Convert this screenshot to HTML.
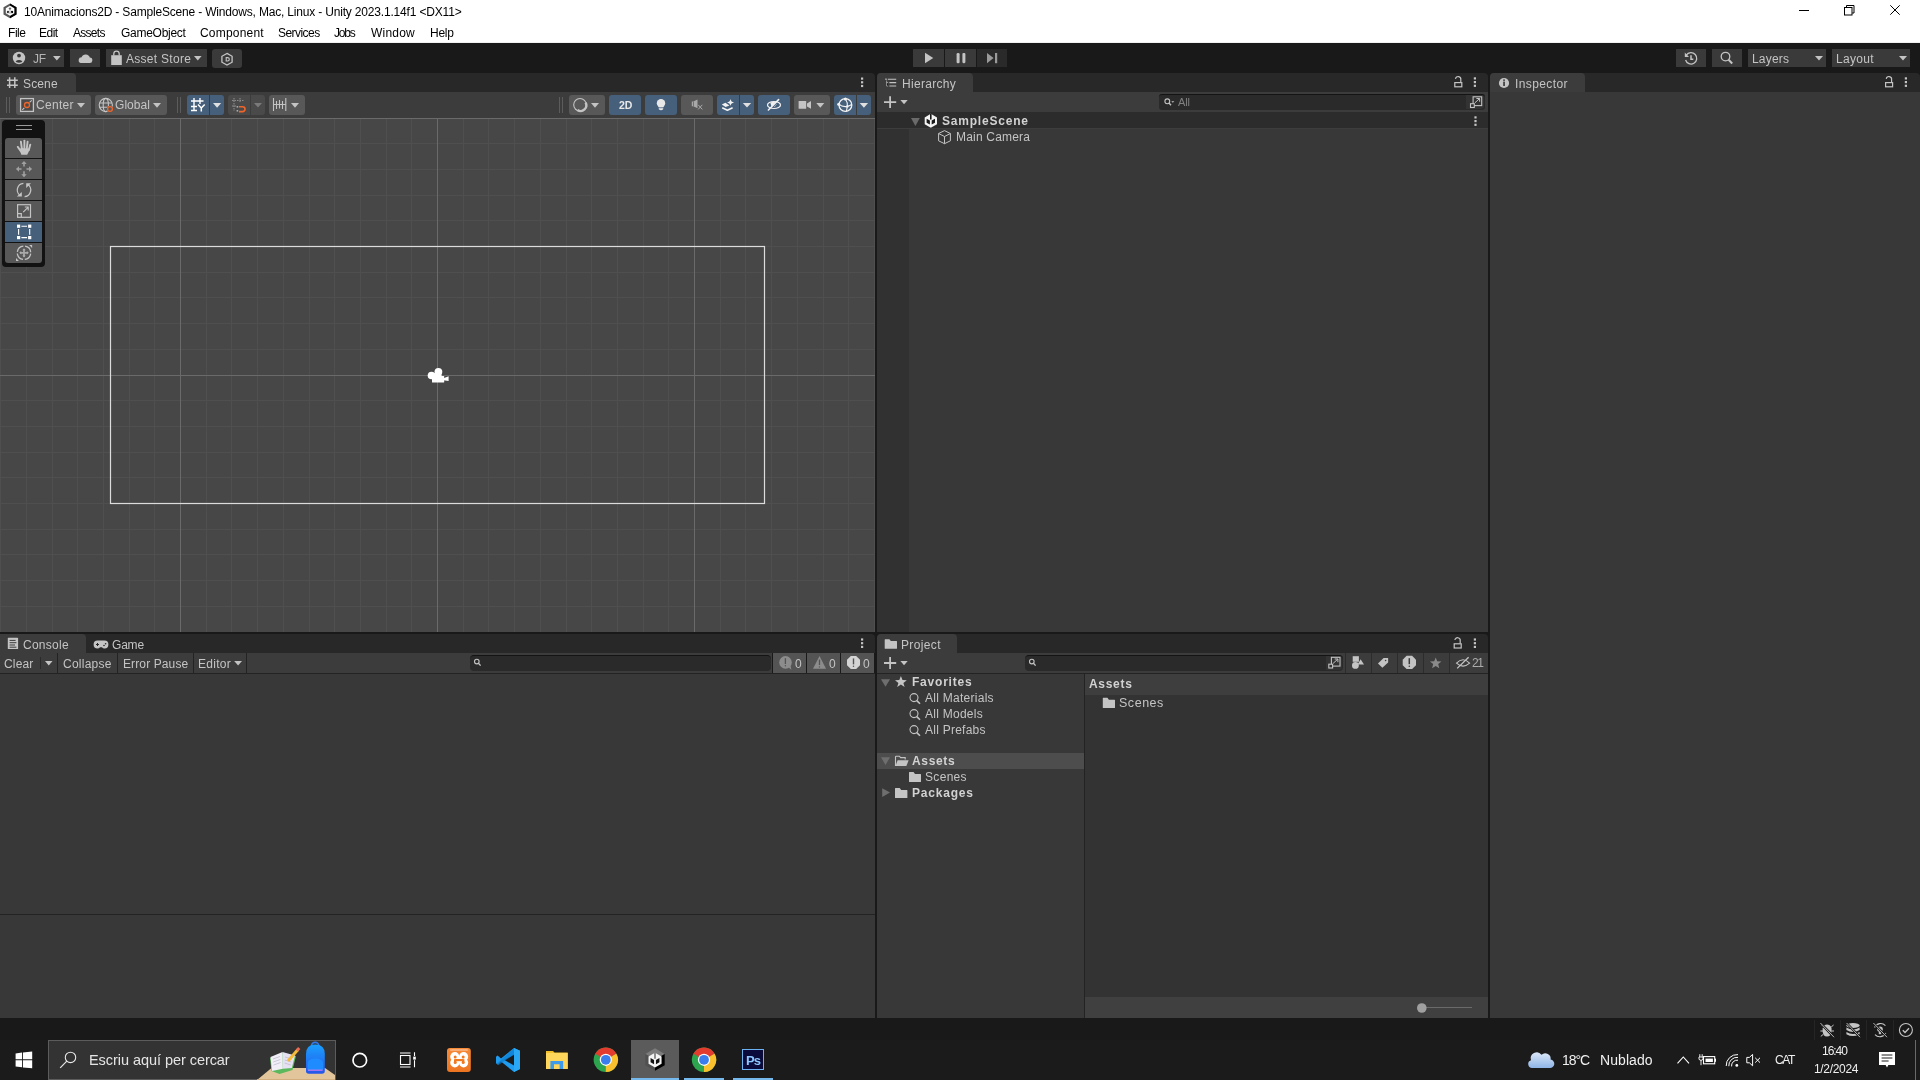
<!DOCTYPE html>
<html><head><meta charset="utf-8">
<style>
*{margin:0;padding:0;box-sizing:border-box}
html,body{width:1920px;height:1080px;overflow:hidden;background:#191919;font-family:"Liberation Sans",sans-serif;font-size:12px;color:#c4c4c4}
.a{position:absolute}
.t{position:absolute;white-space:nowrap;line-height:1;will-change:transform}
svg{position:absolute;overflow:visible}
</style></head><body>
<div class="a" style="left:0px;top:0px;width:1920px;height:42px;background:#ffffff"></div>
<div class="a" style="left:0px;top:42px;width:1920px;height:1px;background:#f0f0f0"></div>
<svg style="left:0px;top:0px;" width="24" height="24" viewBox="0 0 24 24"><polygon points="10,3.5 16.5,7.2 16.5,14.6 10,18.3 3.5,14.6 3.5,7.2" fill="#5a5a5a"/><polygon points="10,3.5 16.5,7.2 16.5,14.6 10,18.3 10,16 14.5,13.4 14.5,8.2 10,5.5" fill="#000"/><polygon points="10,5.8 14.2,8.2 14.2,13.3 10,15.8 5.8,13.3 5.8,8.2" fill="#fff"/><circle cx="10" cy="8.6" r="1.2" fill="#666"/><circle cx="8" cy="12" r="1.2" fill="#333"/><circle cx="12" cy="12" r="1.2" fill="#000"/><path d="M10 9.5V13.5M8.5 12.3L10 13.3L11.5 12.3" stroke="#aaa" stroke-width="0.8" fill="none"/></svg>
<svg style="left:0px;top:0px;" width="1" height="1" viewBox="0 0 1 1"><path d="M1799 10.5H1809" stroke="#000" stroke-width="1"/><rect x="1844.5" y="7.5" width="7.5" height="7.5" fill="none" stroke="#000" stroke-width="1"/><path d="M1846.5 7.3 V5.5 H1854 V13 H1852.2" stroke="#000" fill="none" stroke-width="1"/><path d="M1890.3 5.3L1899.7 14.7M1899.7 5.3L1890.3 14.7" stroke="#000" stroke-width="1"/></svg>
<div class="a" style="left:0px;top:43px;width:1920px;height:30px;background:#191919"></div>
<div class="a" style="left:8px;top:49px;width:56px;height:18px;background:#3a3a3a"></div>
<div class="a" style="left:70px;top:49px;width:30px;height:18px;background:#3a3a3a"></div>
<div class="a" style="left:106px;top:49px;width:101px;height:18px;background:#3a3a3a"></div>
<div class="a" style="left:212px;top:49px;width:30px;height:19px;background:#3a3a3a;border-radius:3px"></div>
<div class="a" style="left:913px;top:49px;width:31px;height:18px;background:#3a3a3a"></div>
<div class="a" style="left:945px;top:49px;width:31px;height:18px;background:#3a3a3a"></div>
<div class="a" style="left:977px;top:49px;width:30px;height:18px;background:#2a2a2a"></div>
<div class="a" style="left:1676px;top:49px;width:30px;height:18px;background:#3a3a3a"></div>
<div class="a" style="left:1712px;top:49px;width:30px;height:18px;background:#3a3a3a"></div>
<div class="a" style="left:1748px;top:49px;width:78px;height:18px;background:#3a3a3a"></div>
<div class="a" style="left:1832px;top:49px;width:78px;height:18px;background:#3a3a3a"></div>
<!--ICONS_TOOLBAR-->
<div class="a" style="left:0px;top:73px;width:875px;height:19px;background:#282828;border-radius:0 4px 0 0"></div>
<div class="a" style="left:0px;top:73px;width:76px;height:19px;background:#3c3c3c;border-radius:0 4px 0 0"></div>
<div class="a" style="left:0px;top:92px;width:875px;height:26px;background:#3c3c3c"></div>
<div class="a" style="left:877px;top:73px;width:611px;height:19px;background:#282828;border-radius:4px 4px 0 0"></div>
<div class="a" style="left:877px;top:73px;width:96px;height:19px;background:#3c3c3c;border-radius:4px 4px 0 0"></div>
<div class="a" style="left:877px;top:92px;width:611px;height:20px;background:#3c3c3c"></div>
<div class="a" style="left:877px;top:112px;width:611px;height:520px;background:#383838"></div>
<div class="a" style="left:877px;top:112px;width:611px;height:16px;background:#2c2c2c"></div>
<div class="a" style="left:877px;top:128px;width:32px;height:504px;background:#313131"></div>
<div class="a" style="left:877px;top:128px;width:611px;height:1px;background:#3d3d3d"></div>
<div class="a" style="left:1490px;top:73px;width:430px;height:19px;background:#282828;border-radius:4px 4px 0 0"></div>
<div class="a" style="left:1490px;top:73px;width:95px;height:19px;background:#3c3c3c;border-radius:4px 4px 0 0"></div>
<div class="a" style="left:1490px;top:92px;width:430px;height:926px;background:#383838"></div>
<div class="a" style="left:0px;top:634px;width:875px;height:19px;background:#282828;border-radius:0 4px 0 0"></div>
<div class="a" style="left:0px;top:634px;width:86px;height:19px;background:#3c3c3c;border-radius:0 4px 0 0"></div>
<div class="a" style="left:0px;top:653px;width:875px;height:20px;background:#3c3c3c"></div>
<div class="a" style="left:0px;top:673px;width:875px;height:1px;background:#232323"></div>
<div class="a" style="left:0px;top:674px;width:875px;height:344px;background:#383838"></div>
<div class="a" style="left:877px;top:634px;width:611px;height:19px;background:#282828;border-radius:4px 4px 0 0"></div>
<div class="a" style="left:877px;top:634px;width:80px;height:19px;background:#3c3c3c;border-radius:4px 4px 0 0"></div>
<div class="a" style="left:877px;top:653px;width:611px;height:20px;background:#3c3c3c"></div>
<div class="a" style="left:877px;top:673px;width:611px;height:1px;background:#232323"></div>
<div class="a" style="left:877px;top:674px;width:207px;height:344px;background:#383838"></div>
<div class="a" style="left:1084px;top:674px;width:1px;height:344px;background:#232323"></div>
<div class="a" style="left:1085px;top:674px;width:403px;height:344px;background:#333333"></div>
<div class="a" style="left:1085px;top:674px;width:403px;height:21px;background:#3e3e3e"></div>
<div class="a" style="left:1085px;top:997px;width:403px;height:21px;background:#404040"></div>
<div class="a" style="left:0px;top:1018px;width:1920px;height:22px;background:#191919"></div>
<div class="a" style="left:0px;top:1040px;width:1920px;height:40px;background:#1b1b1b"></div>
<!--REST-->
<svg style="left:0;top:118px" width="875" height="514" viewBox="0 0 875 514"><rect width="875" height="514" fill="#474747"/><rect x="0" y="0" width="1" height="514" fill="#4f4f4f"/><rect x="26" y="0" width="1" height="514" fill="#4f4f4f"/><rect x="52" y="0" width="1" height="514" fill="#4f4f4f"/><rect x="77" y="0" width="1" height="514" fill="#4f4f4f"/><rect x="103" y="0" width="1" height="514" fill="#4f4f4f"/><rect x="129" y="0" width="1" height="514" fill="#4f4f4f"/><rect x="154" y="0" width="1" height="514" fill="#4f4f4f"/><rect x="206" y="0" width="1" height="514" fill="#4f4f4f"/><rect x="231" y="0" width="1" height="514" fill="#4f4f4f"/><rect x="257" y="0" width="1" height="514" fill="#4f4f4f"/><rect x="283" y="0" width="1" height="514" fill="#4f4f4f"/><rect x="309" y="0" width="1" height="514" fill="#4f4f4f"/><rect x="334" y="0" width="1" height="514" fill="#4f4f4f"/><rect x="360" y="0" width="1" height="514" fill="#4f4f4f"/><rect x="386" y="0" width="1" height="514" fill="#4f4f4f"/><rect x="411" y="0" width="1" height="514" fill="#4f4f4f"/><rect x="463" y="0" width="1" height="514" fill="#4f4f4f"/><rect x="488" y="0" width="1" height="514" fill="#4f4f4f"/><rect x="514" y="0" width="1" height="514" fill="#4f4f4f"/><rect x="540" y="0" width="1" height="514" fill="#4f4f4f"/><rect x="566" y="0" width="1" height="514" fill="#4f4f4f"/><rect x="591" y="0" width="1" height="514" fill="#4f4f4f"/><rect x="617" y="0" width="1" height="514" fill="#4f4f4f"/><rect x="643" y="0" width="1" height="514" fill="#4f4f4f"/><rect x="668" y="0" width="1" height="514" fill="#4f4f4f"/><rect x="720" y="0" width="1" height="514" fill="#4f4f4f"/><rect x="745" y="0" width="1" height="514" fill="#4f4f4f"/><rect x="771" y="0" width="1" height="514" fill="#4f4f4f"/><rect x="797" y="0" width="1" height="514" fill="#4f4f4f"/><rect x="823" y="0" width="1" height="514" fill="#4f4f4f"/><rect x="848" y="0" width="1" height="514" fill="#4f4f4f"/><rect x="874" y="0" width="1" height="514" fill="#4f4f4f"/><rect x="0" y="25" width="875" height="1" fill="#4f4f4f"/><rect x="0" y="51" width="875" height="1" fill="#4f4f4f"/><rect x="0" y="77" width="875" height="1" fill="#4f4f4f"/><rect x="0" y="102" width="875" height="1" fill="#4f4f4f"/><rect x="0" y="128" width="875" height="1" fill="#4f4f4f"/><rect x="0" y="154" width="875" height="1" fill="#4f4f4f"/><rect x="0" y="179" width="875" height="1" fill="#4f4f4f"/><rect x="0" y="205" width="875" height="1" fill="#4f4f4f"/><rect x="0" y="231" width="875" height="1" fill="#4f4f4f"/><rect x="0" y="282" width="875" height="1" fill="#4f4f4f"/><rect x="0" y="308" width="875" height="1" fill="#4f4f4f"/><rect x="0" y="334" width="875" height="1" fill="#4f4f4f"/><rect x="0" y="359" width="875" height="1" fill="#4f4f4f"/><rect x="0" y="385" width="875" height="1" fill="#4f4f4f"/><rect x="0" y="411" width="875" height="1" fill="#4f4f4f"/><rect x="0" y="436" width="875" height="1" fill="#4f4f4f"/><rect x="0" y="462" width="875" height="1" fill="#4f4f4f"/><rect x="0" y="488" width="875" height="1" fill="#4f4f4f"/><rect x="180" y="0" width="1" height="514" fill="#6a6a6a"/><rect x="437" y="0" width="1" height="514" fill="#6a6a6a"/><rect x="694" y="0" width="1" height="514" fill="#6a6a6a"/><rect x="0" y="0" width="875" height="1" fill="#6a6a6a"/><rect x="0" y="257" width="875" height="1" fill="#6a6a6a"/><rect x="110.5" y="128.5" width="654" height="257" fill="none" stroke="#dcdcdc" stroke-width="1.2"/></svg>
<svg style="left:420px;top:360px;" width="40" height="30" viewBox="0 0 40 30"><g fill="#fff"><circle cx="18.4" cy="11.8" r="3.9"/><circle cx="11.5" cy="15.5" r="3.8"/><rect x="12" y="16" width="12.2" height="6.6" rx="0.5"/><polygon points="12,14 16,12.5 21,13 22,17 12,17"/><polygon points="23.5,18.3 28.6,16.3 28.6,21 23.5,20.2"/></g></svg>
<div class="a" style="left:2px;top:120px;width:43px;height:147px;background:#121212;border-radius:4px"></div>
<div class="a" style="left:16px;top:125px;width:16px;height:1px;background:#9a9a9a"></div>
<div class="a" style="left:16px;top:129px;width:16px;height:1px;background:#9a9a9a"></div>
<div class="a" style="left:5px;top:138px;width:37px;height:20px;background:#585858;border-radius:3px 3px 0 0"></div>
<div class="a" style="left:5px;top:159px;width:37px;height:20px;background:#585858"></div>
<div class="a" style="left:5px;top:180px;width:37px;height:20px;background:#585858"></div>
<div class="a" style="left:5px;top:201px;width:37px;height:20px;background:#585858"></div>
<div class="a" style="left:5px;top:222px;width:37px;height:20px;background:#46607c"></div>
<div class="a" style="left:5px;top:243px;width:37px;height:20px;background:#585858;border-radius:0 0 3px 3px"></div>
<svg style="left:0px;top:0px;" width="1" height="1" viewBox="0 0 1 1"><circle cx="19" cy="58" r="6.2" fill="#c4c4c4"/><circle cx="19" cy="55.6" r="1.9" fill="#3a3a3a"/><path d="M15.6 61.2 Q19 58.8 22.4 61.2 Q22 62.6 19 62.7 Q16 62.6 15.6 61.2Z" fill="#3a3a3a"/></svg>
<svg style="left:0px;top:0px;" width="1" height="1" viewBox="0 0 1 1"><polygon points="53,56 60.7,56 56.85,60.5" fill="#c4c4c4"/></svg>
<svg style="left:0px;top:0px;" width="1" height="1" viewBox="0 0 1 1"><path d="M80.5 63 H89.5 A2.7 2.7 0 0 0 89.8 57.6 A4.3 4.3 0 0 0 81.6 57.2 A3 3 0 0 0 80.5 63Z" fill="#c4c4c4"/></svg>
<svg style="left:0px;top:0px;" width="1" height="1" viewBox="0 0 1 1"><rect x="111.2" y="55.2" width="10.6" height="9.8" fill="#c4c4c4"/><path d="M113.8 55.5 V53.8 A2.7 2.7 0 0 1 119.2 53.8 V55.5" stroke="#c4c4c4" stroke-width="1.3" fill="none"/></svg>
<svg style="left:0px;top:0px;" width="1" height="1" viewBox="0 0 1 1"><polygon points="194,56 201.6,56 197.8,60.5" fill="#c4c4c4"/></svg>
<svg style="left:0px;top:0px;" width="1" height="1" viewBox="0 0 1 1"><polygon points="227,53.4 232.1,56.3 232.1,62.2 227,65.1 221.9,62.2 221.9,56.3" fill="none" stroke="#c4c4c4" stroke-width="1.3"/><path d="M226.2 57.6 H227.6 A1.7 1.7 0 0 1 227.6 61 H226.2Z" fill="none" stroke="#c4c4c4" stroke-width="1.1"/></svg>
<svg style="left:0px;top:0px;" width="1" height="1" viewBox="0 0 1 1"><polygon points="925,52.8 933.3,58 925,63.3" fill="#c4c4c4"/><rect x="956.6" y="53" width="3" height="10.2" rx="1.2" fill="#c4c4c4"/><rect x="962.4" y="53" width="3" height="10.2" rx="1.1" fill="#c4c4c4"/><polygon points="987,53 993.6,58 987,63.2" fill="#9a9a9a"/><rect x="995" y="53" width="2.2" height="10.2" fill="#9a9a9a"/></svg>
<svg style="left:0px;top:0px;" width="1" height="1" viewBox="0 0 1 1"><path d="M1686.3 55.2 A5.7 5.7 0 1 1 1685.6 60" stroke="#c4c4c4" stroke-width="1.3" fill="none"/><polygon points="1684.8,52.6 1684.8,57 1689,56.9" fill="#c4c4c4"/><path d="M1691 55.3 V59.2 H1693.3" stroke="#c4c4c4" stroke-width="1.5" fill="none"/></svg>
<svg style="left:0px;top:0px;" width="1" height="1" viewBox="0 0 1 1"><circle cx="1725.5" cy="56.6" r="4.3" stroke="#c4c4c4" stroke-width="1.3" fill="none"/><path d="M1728.6 59.8 L1732.2 63.5" stroke="#c4c4c4" stroke-width="2" /></svg>
<svg style="left:0px;top:0px;" width="1" height="1" viewBox="0 0 1 1"><polygon points="1815,56 1823,56 1819.0,60.5" fill="#c4c4c4"/></svg>
<svg style="left:0px;top:0px;" width="1" height="1" viewBox="0 0 1 1"><polygon points="1899,56 1907,56 1903.0,60.5" fill="#c4c4c4"/></svg>
<div class="a" style="left:6px;top:97px;width:1px;height:16px;background:#5c5c5c"></div>
<div class="a" style="left:9px;top:97px;width:1px;height:16px;background:#5c5c5c"></div>
<div class="a" style="left:177px;top:97px;width:1px;height:16px;background:#5c5c5c"></div>
<div class="a" style="left:180px;top:97px;width:1px;height:16px;background:#5c5c5c"></div>
<div class="a" style="left:559px;top:97px;width:1px;height:16px;background:#5c5c5c"></div>
<div class="a" style="left:562px;top:97px;width:1px;height:16px;background:#5c5c5c"></div>
<div class="a" style="left:16px;top:95px;width:75px;height:20px;background:#585858;border-radius:3px"></div>
<div class="a" style="left:95px;top:95px;width:72px;height:20px;background:#585858;border-radius:3px"></div>
<div class="a" style="left:187px;top:95px;width:22px;height:20px;background:#46607c;border-radius:3px 0 0 3px"></div>
<div class="a" style="left:210px;top:95px;width:14px;height:20px;background:#46607c;border-radius:0 3px 3px 0"></div>
<div class="a" style="left:228px;top:95px;width:22px;height:20px;background:#4a4a4a;border-radius:3px 0 0 3px"></div>
<div class="a" style="left:251px;top:95px;width:14px;height:20px;background:#4a4a4a;border-radius:0 3px 3px 0"></div>
<div class="a" style="left:269px;top:95px;width:36px;height:20px;background:#585858;border-radius:3px"></div>
<div class="a" style="left:569px;top:95px;width:36px;height:20px;background:#585858;border-radius:3px"></div>
<div class="a" style="left:609px;top:95px;width:32px;height:20px;background:#46607c;border-radius:3px"></div>
<div class="a" style="left:645px;top:95px;width:32px;height:20px;background:#46607c;border-radius:3px"></div>
<div class="a" style="left:681px;top:95px;width:32px;height:20px;background:#585858;border-radius:3px"></div>
<div class="a" style="left:717px;top:95px;width:22px;height:20px;background:#46607c;border-radius:3px 0 0 3px"></div>
<div class="a" style="left:740px;top:95px;width:14px;height:20px;background:#46607c;border-radius:0 3px 3px 0"></div>
<div class="a" style="left:758px;top:95px;width:32px;height:20px;background:#46607c;border-radius:3px"></div>
<div class="a" style="left:794px;top:95px;width:36px;height:20px;background:#585858;border-radius:3px"></div>
<div class="a" style="left:834px;top:95px;width:22px;height:20px;background:#46607c;border-radius:3px 0 0 3px"></div>
<div class="a" style="left:857px;top:95px;width:14px;height:20px;background:#46607c;border-radius:0 3px 3px 0"></div>
<svg style="left:0px;top:0px;" width="1" height="1" viewBox="0 0 1 1"><rect x="20.6" y="98.6" width="12.8" height="12.8" fill="#4a4a4a" stroke="#c4c4c4" stroke-width="1.3"/><path d="M22.3 109.9 L24.3 107.9 M29.6 102.4 L31.7 100.3" stroke="#c4c4c4" stroke-width="1.1"/><circle cx="27" cy="105" r="2.5" fill="none" stroke="#f0652a" stroke-width="1.3"/></svg>
<svg style="left:0px;top:0px;" width="1" height="1" viewBox="0 0 1 1"><polygon points="77,103 85,103 81.0,107.8" fill="#c4c4c4"/></svg>
<svg style="left:0px;top:0px;" width="1" height="1" viewBox="0 0 1 1"><circle cx="105.8" cy="105" r="6.6" fill="none" stroke="#c4c4c4" stroke-width="1.1"/><ellipse cx="105.8" cy="105" rx="2.6" ry="6.6" fill="none" stroke="#c4c4c4" stroke-width="1.1"/><path d="M99.5 103 H112 M99.5 107.2 H112" stroke="#c4c4c4" stroke-width="1.1"/><circle cx="110" cy="109" r="3.2" fill="#585858"/><circle cx="110" cy="109" r="2.4" fill="none" stroke="#f0652a" stroke-width="1.3"/></svg>
<svg style="left:0px;top:0px;" width="1" height="1" viewBox="0 0 1 1"><polygon points="153,103 161,103 157.0,107.8" fill="#c4c4c4"/></svg>
<svg style="left:0px;top:0px;" width="1" height="1" viewBox="0 0 1 1"><path d="M194 98 V111 M200 98 V104 M191 101 H203.5 M191 106.5 H197 M191 110.5 H197" stroke="#fff" stroke-width="1.4"/><path d="M198 104.5 L201.3 108 L204.7 104.5 M201.3 108 V111.5" stroke="#fff" stroke-width="1.5" fill="none"/></svg>
<svg style="left:0px;top:0px;" width="1" height="1" viewBox="0 0 1 1"><polygon points="213,103 221.2,103 217.1,107.8" fill="#e0e0e0"/></svg>
<svg style="left:0px;top:0px;" width="1" height="1" viewBox="0 0 1 1"><path d="M234 98 V111 M240 98 V103 M232 100.5 H244.5 M232 106 H236.5" stroke="#8a8a8a" stroke-width="1.1" stroke-dasharray="1.5 1"/><rect x="236.6" y="106" width="1.6" height="1.6" fill="#aaa"/><rect x="236.6" y="110" width="1.6" height="1.6" fill="#aaa"/><path d="M239 106.8 H242.6 A2.4 2.4 0 0 1 242.6 111.6 H239" stroke="#f0652a" stroke-width="1.6" fill="none"/></svg>
<svg style="left:0px;top:0px;" width="1" height="1" viewBox="0 0 1 1"><polygon points="254,103 262,103 258.0,107.6" fill="#7a7a7a"/></svg>
<svg style="left:0px;top:0px;" width="1" height="1" viewBox="0 0 1 1"><path d="M273.5 98 V111 M285.8 98 V111 M276.5 101 V109 M279.5 100 V108.5 M282.5 101 V109" stroke="#c4c4c4" stroke-width="1.1"/><path d="M273.5 104.5 H285.8" stroke="#c4c4c4" stroke-width="1"/></svg>
<svg style="left:0px;top:0px;" width="1" height="1" viewBox="0 0 1 1"><polygon points="291,103 299,103 295.0,107.8" fill="#c4c4c4"/></svg>
<svg style="left:0px;top:0px;" width="1" height="1" viewBox="0 0 1 1"><circle cx="580" cy="104.8" r="6.3" fill="none" stroke="#c4c4c4" stroke-width="1.1"/><path d="M585.6 102.6 A5.6 5.6 0 0 1 577.6 110" fill="none" stroke="#c4c4c4" stroke-width="2.4"/></svg>
<svg style="left:0px;top:0px;" width="1" height="1" viewBox="0 0 1 1"><polygon points="591,103 599,103 595.0,107.8" fill="#c4c4c4"/></svg>
<svg style="left:0px;top:0px;" width="1" height="1" viewBox="0 0 1 1"><circle cx="661" cy="103.2" r="4.2" fill="#e8e8e8"/><path d="M658.8 106 H663.2 V109.2 Q661 111.2 658.8 109.2Z" fill="#e8e8e8"/><rect x="658.5" y="107.4" width="5" height="0.8" fill="#46607c"/></svg>
<svg style="left:0px;top:0px;" width="1" height="1" viewBox="0 0 1 1"><path d="M691.8 101.6 H693.3 L697.5 99.4 V108.3 L693.3 106.2 H691.8Z" fill="#a8a8a8"/><rect x="693.3" y="101.6" width="0.7" height="4.6" fill="#585858"/><path d="M698.2 104.8 L702.3 109.4 M702.3 104.8 L698.2 109.4" stroke="#a8a8a8" stroke-width="1"/></svg>
<svg style="left:0px;top:0px;" width="1" height="1" viewBox="0 0 1 1"><path d="M721.8 104.6 L725.4 102.8 L729.4 105.4 L725.6 107Z" fill="#f2f2f2"/><path d="M722.2 107.8 L727.4 110.2 L732.6 107.8" stroke="#f2f2f2" stroke-width="1.7" fill="none" stroke-linejoin="round"/><path d="M730.5 98.9 Q731 101.9 734.1 102.4 Q731 102.9 730.5 105.8 Q730 102.9 727 102.4 Q730 101.9 730.5 98.9Z" fill="#f2f2f2"/></svg>
<svg style="left:0px;top:0px;" width="1" height="1" viewBox="0 0 1 1"><polygon points="742.8,103 751.2,103 747.0,107.6" fill="#e0e0e0"/></svg>
<svg style="left:0px;top:0px;" width="1" height="1" viewBox="0 0 1 1"><ellipse cx="774" cy="105" rx="6.5" ry="3.5" fill="none" stroke="#f2f2f2" stroke-width="1.2"/><path d="M770.2 102.4 Q773 101.6 775.6 101.8 L771.6 106.6 Q770.8 104.4 770.2 102.4Z" fill="#f2f2f2"/><path d="M768.4 110 L778.6 99.6" stroke="#f2f2f2" stroke-width="1.6" stroke-linecap="round"/><path d="M776.2 104.6 L774.4 106.8" stroke="#f2f2f2" stroke-width="1" stroke-dasharray="1 0.6"/></svg>
<svg style="left:0px;top:0px;" width="1" height="1" viewBox="0 0 1 1"><rect x="798.6" y="101" width="7.6" height="7.8" rx="0.6" fill="#c4c4c4"/><polygon points="807,103.4 811,101 811,108.8 807,106.6" fill="#c4c4c4"/></svg>
<svg style="left:0px;top:0px;" width="1" height="1" viewBox="0 0 1 1"><polygon points="816.3,103 824.3,103 820.3,107.8" fill="#c4c4c4"/></svg>
<svg style="left:0px;top:0px;" width="1" height="1" viewBox="0 0 1 1"><circle cx="845.4" cy="105" r="6.4" fill="none" stroke="#f2f2f2" stroke-width="1.3"/><path d="M838.8 104.4 Q842.5 107.2 847.3 106.4 Q850.5 105.8 851.8 104.2 M845.6 99.2 Q847.8 102.5 847.3 106.4 Q846.9 109.4 846.2 111.6" stroke="#f2f2f2" stroke-width="1.1" fill="none"/><circle cx="845.4" cy="99.1" r="1.5" fill="#f2f2f2"/><circle cx="838.7" cy="104.3" r="1.5" fill="#f2f2f2"/><circle cx="847.3" cy="106.4" r="1.2" fill="#f2f2f2"/></svg>
<svg style="left:0px;top:0px;" width="1" height="1" viewBox="0 0 1 1"><polygon points="859.7,103 868.1,103 863.9000000000001,107.8" fill="#e0e0e0"/></svg>
<svg style="left:0px;top:0px;" width="1" height="1" viewBox="0 0 1 1"><rect x="861" y="77.5" width="2.2" height="2.2" fill="#c4c4c4"/><rect x="861" y="81.2" width="2.2" height="2.2" fill="#c4c4c4"/><rect x="861" y="84.9" width="2.2" height="2.2" fill="#c4c4c4"/></svg>
<svg style="left:0px;top:0px;" width="1" height="1" viewBox="0 0 1 1"><path d="M9.6 77.3 V88 M14.8 77.3 V88 M7 80.2 H17.8 M7 85.2 H17.8" stroke="#c4c4c4" stroke-width="1.5"/></svg>
<svg style="left:0px;top:0px;" width="1" height="1" viewBox="0 0 1 1"><g stroke="#c4c4c4" stroke-width="1.9" stroke-linecap="round"><path d="M17.8 146.9 L21 151.5"/><path d="M20.9 141.6 L21.9 149"/><path d="M24.4 140.6 V148"/><path d="M27.6 141.6 L26.8 148.5"/><path d="M30.3 144.6 L28.8 150"/></g><polygon points="19.6,149.2 21,148 29.6,148.6 29.4,150.2 27.2,154.8 21.3,154.8" fill="#c4c4c4"/><g stroke="#a0a0a0" stroke-width="1.6" fill="none"><path d="M24 162 V166.5 M24 171.3 V176 M16.8 169 H21.5 M26.5 169 H31.2"/></g><g fill="#a0a0a0"><polygon points="24,161 21.3,164 26.7,164"/><polygon points="24,177.2 21.3,174.2 26.7,174.2"/><polygon points="16,169 19,166.3 19,171.7"/><polygon points="32,169 29,166.3 29,171.7"/></g><path d="M23.4 183.3 A6.7 6.7 0 0 0 20.2 195.5 M24.6 196.7 A6.7 6.7 0 0 0 27.8 184.5" stroke="#c4c4c4" stroke-width="1.2" fill="none"/><polygon points="21.8,196.6 16.9,196.6 21.8,191.9" fill="#c4c4c4"/><polygon points="26.2,183.2 31,183.2 26.2,187.9" fill="#c4c4c4"/><rect x="17.6" y="204.7" width="12.9" height="12.6" fill="none" stroke="#c4c4c4" stroke-width="1.2"/><path d="M17.6 213.6 H21.3 V217.3" fill="none" stroke="#c4c4c4" stroke-width="1.2"/><path d="M23.2 212.2 L28 207.4 M24.8 207 H28.2 V210.4" stroke="#c4c4c4" stroke-width="1.2" fill="none"/><g fill="#fff"><rect x="17" y="224.6" width="3.2" height="3.2"/><rect x="28.1" y="224.6" width="3.2" height="3.2"/><rect x="17" y="236" width="3.2" height="3.2"/><rect x="28.1" y="236" width="3.2" height="3.2"/></g><path d="M21.4 226.3 H27 M21.4 237.6 H27 M18.6 229 V234.8 M29.7 229 V234.8" stroke="#fff" stroke-width="1.1"/><circle cx="24" cy="252.8" r="6.7" fill="none" stroke="#c4c4c4" stroke-width="1.3" stroke-dasharray="8.73 1.8" stroke-dashoffset="-0.9"/><path d="M24 249.4 V256.2 M20.6 252.8 H27.4" stroke="#a8a8a8" stroke-width="1.8"/><g fill="#b0b0b0"><polygon points="24,248.2 22.3,250.2 25.7,250.2"/><polygon points="24,257.4 22.3,255.4 25.7,255.4"/><polygon points="19.2,252.8 21.2,251.1 21.2,254.5"/><polygon points="28.8,252.8 26.8,251.1 26.8,254.5"/></g><polygon points="29.2,245 32.1,245 32.1,247.9" fill="#c4c4c4"/><polygon points="16,258 16,260.9 18.9,260.9" fill="#c4c4c4"/></svg>
<svg style="left:0px;top:0px;" width="1" height="1" viewBox="0 0 1 1"><path d="M887.8 79.2 H896.2 M889.4 82.6 H896.2 M889.4 86 H896.2" stroke="#c4c4c4" stroke-width="1.1"/><path d="M885.2 79.2 H886.8 M886 78.4 V80 M886.6 80.5 V86 H888.2 M886.6 82.6 H888.2" stroke="#c4c4c4" stroke-width="0.7"/></svg>
<svg style="left:0px;top:0px;" width="1" height="1" viewBox="0 0 1 1"><path d="M884 102.1 H896.2 M890.1 96.2 V108" stroke="#c4c4c4" stroke-width="1.8"/></svg>
<svg style="left:0px;top:0px;" width="1" height="1" viewBox="0 0 1 1"><polygon points="900.4,100 907.7,100 904.05,104.2" fill="#c4c4c4"/></svg>
<svg style="left:0px;top:0px;" width="1" height="1" viewBox="0 0 1 1"><polygon points="911,117.9 919.8,117.9 915.4,126" fill="#6a6a6a"/></svg>
<svg style="left:0px;top:0px;" width="1" height="1" viewBox="0 0 1 1"><polygon points="930.80,113.80 937.00,117.40 937.00,124.20 930.80,127.70 924.70,124.20 924.70,117.40" fill="#f4f4f4"/><polygon points="926.60,118.70 929.90,120.60 929.90,124.60 926.60,122.70" fill="#1a1a1a"/><polygon points="935.00,118.70 931.70,120.60 931.70,124.60 935.00,122.70" fill="#1a1a1a"/><polygon points="930.00,113.90 931.60,113.90 931.60,119.20 930.80,119.70 930.00,119.20" fill="#1a1a1a"/></svg>
<svg style="left:0px;top:0px;" width="1" height="1" viewBox="0 0 1 1"><path d="M944.5 130.6 L950.4 133.5 V140.8 L944.5 143.7 L938.6 140.8 V133.5Z M938.6 133.5 L944.5 136.5 L950.4 133.5 M944.5 136.5 V143.7" stroke="#c4c4c4" stroke-width="1" fill="none" stroke-linejoin="round"/></svg>
<div class="a" style="left:1159px;top:94px;width:326px;height:16px;background:#2a2a2a;border-radius:3px;border-top:1px solid #141414"></div>
<div class="a" style="left:1466px;top:95px;width:18px;height:14px;background:#333333;border-radius:0 3px 3px 0"></div>
<svg style="left:0px;top:0px;" width="1" height="1" viewBox="0 0 1 1"><circle cx="1167.3" cy="101.3" r="2.4" fill="none" stroke="#c4c4c4" stroke-width="1.1"/><path d="M1169 103 L1171 105.3" stroke="#c4c4c4" stroke-width="1.3"/><polygon points="1171.3,101.2 1174.3,101.2 1172.8,102.8" fill="#c4c4c4"/></svg>
<svg style="left:0px;top:0px;" width="1" height="1" viewBox="0 0 1 1"><rect x="1473.1" y="96.8" width="8.6" height="8.8" fill="none" stroke="#c4c4c4" stroke-width="1.1"/><rect x="1470.5" y="103.7" width="3.8" height="3.8" fill="#333" stroke="#c4c4c4" stroke-width="1.1"/><path d="M1474.8 102.89999999999999 L1479.6 98.5 M1476.4 98.5 H1479.6 V101.7" stroke="#c4c4c4" stroke-width="1" fill="none"/></svg>
<svg style="left:0px;top:0px;" width="1" height="1" viewBox="0 0 1 1"><rect x="1454.8" y="82.6" width="7" height="4.2" fill="none" stroke="#c4c4c4" stroke-width="1.2"/><path d="M1455.5 78.8 A2.6 2.6 0 0 1 1460.8 79.6 V82.2" stroke="#c4c4c4" stroke-width="1.2" fill="none"/></svg>
<svg style="left:0px;top:0px;" width="1" height="1" viewBox="0 0 1 1"><rect x="1473.8" y="77.3" width="2.2" height="2.2" fill="#c4c4c4"/><rect x="1473.8" y="81.0" width="2.2" height="2.2" fill="#c4c4c4"/><rect x="1473.8" y="84.7" width="2.2" height="2.2" fill="#c4c4c4"/></svg>
<svg style="left:0px;top:0px;" width="1" height="1" viewBox="0 0 1 1"><rect x="1474.4" y="116.3" width="2.2" height="2.2" fill="#c4c4c4"/><rect x="1474.4" y="120.0" width="2.2" height="2.2" fill="#c4c4c4"/><rect x="1474.4" y="123.7" width="2.2" height="2.2" fill="#c4c4c4"/></svg>
<svg style="left:0px;top:0px;" width="1" height="1" viewBox="0 0 1 1"><circle cx="1504" cy="83" r="5.1" fill="#c4c4c4"/><rect x="1503.2" y="81.6" width="1.7" height="4.4" fill="#3c3c3c"/><rect x="1503.2" y="79.4" width="1.7" height="1.5" fill="#3c3c3c"/></svg>
<svg style="left:0px;top:0px;" width="1" height="1" viewBox="0 0 1 1"><rect x="1885.6" y="82.6" width="7" height="4.2" fill="none" stroke="#c4c4c4" stroke-width="1.2"/><path d="M1886.3 78.8 A2.6 2.6 0 0 1 1891.6 79.6 V82.2" stroke="#c4c4c4" stroke-width="1.2" fill="none"/></svg>
<svg style="left:0px;top:0px;" width="1" height="1" viewBox="0 0 1 1"><rect x="1904.8" y="77.3" width="2.2" height="2.2" fill="#c4c4c4"/><rect x="1904.8" y="81.0" width="2.2" height="2.2" fill="#c4c4c4"/><rect x="1904.8" y="84.7" width="2.2" height="2.2" fill="#c4c4c4"/></svg>
<div class="a" style="left:0px;top:914px;width:875px;height:1px;background:#232323"></div>
<svg style="left:0px;top:0px;" width="1" height="1" viewBox="0 0 1 1"><rect x="7.8" y="637.8" width="10.3" height="11.3" rx="0.6" fill="#c4c4c4"/><path d="M9.6 640.4 H15.6 M9.6 642.7 H16.4 M9.6 645 H15 M9.6 647.2 H16.4" stroke="#3c3c3c" stroke-width="1"/></svg>
<svg style="left:0px;top:0px;" width="1" height="1" viewBox="0 0 1 1"><path d="M97.5 640.6 H104.5 A3.9 3.9 0 0 1 104.5 648.4 Q102.8 648.4 102 647.2 H100 Q99.2 648.4 97.5 648.4 A3.9 3.9 0 0 1 97.5 640.6Z" fill="#c4c4c4"/><path d="M96 644.5 H99 M97.5 643 V646" stroke="#282828" stroke-width="1"/><circle cx="104" cy="645.5" r="0.8" fill="#282828"/><circle cx="105.6" cy="643.8" r="0.8" fill="#282828"/></svg>
<div class="a" style="left:57px;top:653px;width:1px;height:20px;background:#232323"></div>
<div class="a" style="left:117px;top:653px;width:1px;height:20px;background:#232323"></div>
<div class="a" style="left:193px;top:653px;width:1px;height:20px;background:#232323"></div>
<div class="a" style="left:246px;top:653px;width:1px;height:20px;background:#232323"></div>
<div class="a" style="left:40px;top:657px;width:1px;height:12px;background:#2a2a2a"></div>
<svg style="left:0px;top:0px;" width="1" height="1" viewBox="0 0 1 1"><polygon points="45,661 52.5,661 48.75,665.5" fill="#c4c4c4"/></svg>
<svg style="left:0px;top:0px;" width="1" height="1" viewBox="0 0 1 1"><polygon points="234.2,661 242,661 238.1,665.5" fill="#c4c4c4"/></svg>
<div class="a" style="left:470px;top:655px;width:301px;height:16px;background:#2a2a2a;border-radius:4px;border-top:1px solid #141414"></div>
<svg style="left:0px;top:0px;" width="1" height="1" viewBox="0 0 1 1"><circle cx="476.8" cy="661.6" r="2.3" fill="none" stroke="#c4c4c4" stroke-width="1.1"/><path d="M478.4 663.2 L480.6 665.6" stroke="#c4c4c4" stroke-width="1.3"/></svg>
<div class="a" style="left:772px;top:653px;width:103px;height:20px;background:#191919"></div>
<div class="a" style="left:773px;top:653px;width:33px;height:20px;background:#545454"></div>
<div class="a" style="left:807px;top:653px;width:33px;height:20px;background:#545454"></div>
<div class="a" style="left:841px;top:653px;width:33px;height:20px;background:#545454"></div>
<svg style="left:0px;top:0px;" width="1" height="1" viewBox="0 0 1 1"><circle cx="785.5" cy="662.4" r="6.3" fill="#8c8c8c"/><polygon points="788,667 791.4,669.8 790.4,665" fill="#8c8c8c"/><path d="M785.4 658.2 V664" stroke="#545454" stroke-width="1.3"/><circle cx="785.4" cy="665.8" r="0.7" fill="#545454"/><polygon points="819.5,656 826,668.8 813,668.8" fill="#8c8c8c"/><path d="M819.5 659.6 V665" stroke="#545454" stroke-width="1.3"/><circle cx="819.5" cy="666.9" r="0.7" fill="#545454"/><polygon points="850.8,656 856.2,656 860,659.8 860,665.2 856.2,669 850.8,669 847,665.2 847,659.8" fill="#d4d4d4"/><path d="M853.5 658.4 V664.4" stroke="#545454" stroke-width="1.4"/><circle cx="853.5" cy="666.3" r="0.75" fill="#545454"/></svg>
<svg style="left:0px;top:0px;" width="1" height="1" viewBox="0 0 1 1"><rect x="861" y="638.4" width="2.2" height="2.2" fill="#c4c4c4"/><rect x="861" y="642.1" width="2.2" height="2.2" fill="#c4c4c4"/><rect x="861" y="645.8" width="2.2" height="2.2" fill="#c4c4c4"/></svg>
<svg style="left:0px;top:0px;" width="1" height="1" viewBox="0 0 1 1"><path d="M884.7 639.7 Q884.7 639.2 885.2 639.2 H889.374 L890.85 641.12 H896.5 Q897 641.12 897 641.62 V648.3 Q897 648.8 896.5 648.8 H885.2 Q884.7 648.8 884.7 648.3Z" fill="#c4c4c4"/></svg>
<svg style="left:0px;top:0px;" width="1" height="1" viewBox="0 0 1 1"><path d="M884 663.0 H896.2 M890.1 657 V669" stroke="#c4c4c4" stroke-width="1.8"/></svg>
<svg style="left:0px;top:0px;" width="1" height="1" viewBox="0 0 1 1"><polygon points="900.4,661 907.7,661 904.05,665.2" fill="#c4c4c4"/></svg>
<div class="a" style="left:1025px;top:655px;width:318px;height:16px;background:#2a2a2a;border-radius:4px;border-top:1px solid #141414"></div>
<div class="a" style="left:1326px;top:656px;width:16px;height:14px;background:#333333;border-radius:0 3px 3px 0"></div>
<svg style="left:0px;top:0px;" width="1" height="1" viewBox="0 0 1 1"><circle cx="1031.8" cy="661.6" r="2.3" fill="none" stroke="#c4c4c4" stroke-width="1.1"/><path d="M1033.4 663.2 L1035.6 665.6" stroke="#c4c4c4" stroke-width="1.3"/></svg>
<svg style="left:0px;top:0px;" width="1" height="1" viewBox="0 0 1 1"><rect x="1331.3999999999999" y="657.3" width="8.6" height="8.8" fill="none" stroke="#c4c4c4" stroke-width="1.1"/><rect x="1328.8" y="664.1999999999999" width="3.8" height="3.8" fill="#333" stroke="#c4c4c4" stroke-width="1.1"/><path d="M1333.1 663.4 L1337.8999999999999 659.0 M1334.7 659.0 H1337.8999999999999 V662.1999999999999" stroke="#c4c4c4" stroke-width="1" fill="none"/></svg>
<div class="a" style="left:1345px;top:653px;width:1px;height:20px;background:#2c2c2c"></div>
<div class="a" style="left:1371px;top:653px;width:1px;height:20px;background:#2c2c2c"></div>
<div class="a" style="left:1397px;top:653px;width:1px;height:20px;background:#2c2c2c"></div>
<div class="a" style="left:1423px;top:653px;width:1px;height:20px;background:#2c2c2c"></div>
<div class="a" style="left:1449px;top:653px;width:1px;height:20px;background:#2c2c2c"></div>
<svg style="left:0px;top:0px;" width="1" height="1" viewBox="0 0 1 1"><rect x="1454.1999999999998" y="643.8000000000001" width="7" height="4.2" fill="none" stroke="#c4c4c4" stroke-width="1.2"/><path d="M1454.8999999999999 640.0 A2.6 2.6 0 0 1 1460.1999999999998 640.8000000000001 V643.4000000000001" stroke="#c4c4c4" stroke-width="1.2" fill="none"/></svg>
<svg style="left:0px;top:0px;" width="1" height="1" viewBox="0 0 1 1"><rect x="1473.8" y="638.4" width="2.2" height="2.2" fill="#c4c4c4"/><rect x="1473.8" y="642.1" width="2.2" height="2.2" fill="#c4c4c4"/><rect x="1473.8" y="645.8" width="2.2" height="2.2" fill="#c4c4c4"/></svg>
<svg style="left:0px;top:0px;" width="1" height="1" viewBox="0 0 1 1"><rect x="1352.7" y="656.2" width="6.2" height="5.6" fill="#c4c4c4"/><circle cx="1355.4" cy="665.4" r="3.4" fill="#c4c4c4"/><polygon points="1360.6,659.3 1364,664.6 1357.6,664.6" fill="#c4c4c4"/><path d="M1383.6 658 H1388.1 V662.6 L1382.4 667.8 L1378 663.4Z" fill="#c4c4c4"/><circle cx="1385.6" cy="660.5" r="0.8" fill="#3c3c3c"/><polygon points="1406.6,655.8 1412.1,655.8 1416,659.7 1416,665.2 1412.1,669 1406.6,669 1402.7,665.2 1402.7,659.7" fill="#c4c4c4"/><path d="M1409.3 658.2 V664.2" stroke="#3c3c3c" stroke-width="1.5"/><circle cx="1409.3" cy="666.2" r="0.8" fill="#3c3c3c"/><polygon points="1435.7,657.5 1437.2,661.3 1441.5,661.5 1438.2,664.1 1439.3,668.2 1435.7,665.9 1432.1,668.2 1433.2,664.1 1429.9,661.5 1434.2,661.3" fill="#8a8a8a"/><path d="M1456.5 663.2 Q1463 656.4 1469.6 663.2 Q1463 669 1456.5 663.2Z" fill="none" stroke="#c4c4c4" stroke-width="1.1"/><path d="M1457.2 668.4 L1468.6 657.2" stroke="#c4c4c4" stroke-width="1.3"/></svg>
<div class="a" style="left:877px;top:753px;width:207px;height:16px;background:#4d4d4d"></div>
<svg style="left:0px;top:0px;" width="1" height="1" viewBox="0 0 1 1"><polygon points="881,679.2 890,679.2 885.5,686.8" fill="#6e6e6e"/></svg>
<svg style="left:0px;top:0px;" width="1" height="1" viewBox="0 0 1 1"><polygon points="900.9,676 902.5,680 906.8,680.2 903.4,682.9 904.6,687 900.9,684.6 897.2,687 898.4,682.9 895,680.2 899.3,680" fill="#c4c4c4"/></svg>
<svg style="left:0px;top:0px;" width="1" height="1" viewBox="0 0 1 1"><circle cx="914.0" cy="697.6" r="4" fill="none" stroke="#c4c4c4" stroke-width="1.1"/><path d="M916.8 700.6 L920.0 703.8" stroke="#c4c4c4" stroke-width="1.6"/></svg>
<svg style="left:0px;top:0px;" width="1" height="1" viewBox="0 0 1 1"><circle cx="914.0" cy="713.6" r="4" fill="none" stroke="#c4c4c4" stroke-width="1.1"/><path d="M916.8 716.6 L920.0 719.8" stroke="#c4c4c4" stroke-width="1.6"/></svg>
<svg style="left:0px;top:0px;" width="1" height="1" viewBox="0 0 1 1"><circle cx="914.0" cy="729.6" r="4" fill="none" stroke="#c4c4c4" stroke-width="1.1"/><path d="M916.8 732.6 L920.0 735.8" stroke="#c4c4c4" stroke-width="1.6"/></svg>
<svg style="left:0px;top:0px;" width="1" height="1" viewBox="0 0 1 1"><polygon points="881,757.2 890,757.2 885.5,765" fill="#6e6e6e"/></svg>
<svg style="left:0px;top:0px;" width="1" height="1" viewBox="0 0 1 1"><path d="M895.5 766 V757 Q895.5 756.2 896.3 756.2 H899.4 L900.6 757.6 H905.2 V759.6" fill="none" stroke="#c4c4c4" stroke-width="1.1"/><path d="M895.5 766 L897.6 760.2 H908.6 L906.4 766Z" fill="#c4c4c4"/></svg>
<svg style="left:0px;top:0px;" width="1" height="1" viewBox="0 0 1 1"><path d="M909 772.5 Q909 772 909.5 772 H913.56 L915.0 774.0 H920.5 Q921 774.0 921 774.5 V781.5 Q921 782 920.5 782 H909.5 Q909 782 909 781.5Z" fill="#c4c4c4"/></svg>
<svg style="left:0px;top:0px;" width="1" height="1" viewBox="0 0 1 1"><polygon points="882.2,788.2 890,792.6 882.2,797" fill="#6e6e6e"/></svg>
<svg style="left:0px;top:0px;" width="1" height="1" viewBox="0 0 1 1"><path d="M895 788.5 Q895 788 895.5 788 H899.712 L901.2 790.0 H906.9 Q907.4 790.0 907.4 790.5 V797.5 Q907.4 798 906.9 798 H895.5 Q895 798 895 797.5Z" fill="#c4c4c4"/></svg>
<svg style="left:0px;top:0px;" width="1" height="1" viewBox="0 0 1 1"><path d="M1102.8 698.3 Q1102.8 697.8 1103.3 697.8 H1107.436 L1108.9 699.86 H1114.5 Q1115 699.86 1115 700.36 V707.6 Q1115 708.1 1114.5 708.1 H1103.3 Q1102.8 708.1 1102.8 707.6Z" fill="#c4c4c4"/></svg>
<div class="a" style="left:1426px;top:1007px;width:46px;height:1px;background:#6a6a6a"></div>
<svg style="left:0px;top:0px;" width="1" height="1" viewBox="0 0 1 1"><circle cx="1421.8" cy="1008" r="4.8" fill="#a0a0a0"/></svg>
<div class="a" style="left:1814px;top:1020px;width:1px;height:20px;background:#252525"></div>
<div class="a" style="left:1840px;top:1020px;width:1px;height:20px;background:#252525"></div>
<div class="a" style="left:1866px;top:1020px;width:1px;height:20px;background:#252525"></div>
<div class="a" style="left:1893px;top:1020px;width:1px;height:20px;background:#252525"></div>
<svg style="left:0px;top:0px;" width="1" height="1" viewBox="0 0 1 1"><path d="M1822.6 1031 Q1822 1024.8 1827 1024.6 Q1832.2 1024.8 1831.6 1031 Q1831.2 1036.5 1827 1036.6 Q1822.8 1036.5 1822.6 1031Z" fill="#c4c4c4"/><path d="M1821 1025 L1823.4 1027 M1833.6 1025 L1831.2 1027 M1820.4 1031 H1823 M1834 1031 H1831.4 M1820.8 1036.4 L1823.2 1034.4 M1833.8 1036.4 L1831.4 1034.4" stroke="#c4c4c4" stroke-width="1"/><path d="M1820.4 1023 L1834 1037.2" stroke="#191919" stroke-width="2.4"/><path d="M1820.4 1023 L1834 1037.2" stroke="#c4c4c4" stroke-width="0.9"/><ellipse cx="1853" cy="1025.4" rx="6.6" ry="2.5" fill="#c4c4c4"/><path d="M1846.4 1027.4 Q1853 1031.4 1859.6 1027.4 V1030 Q1853 1034 1846.4 1030Z M1846.4 1032 Q1853 1036 1859.6 1032 V1034.2 Q1853 1038 1846.4 1034.2Z" fill="#c4c4c4"/><path d="M1846.6 1023 L1860 1037.2" stroke="#191919" stroke-width="2.4"/><path d="M1846.6 1023 L1860 1037.2" stroke="#c4c4c4" stroke-width="0.9"/><path d="M1874.6 1027.4 A6.6 6.6 0 0 1 1885.4 1025.6 M1885.8 1033 A6.6 6.6 0 0 1 1875 1034.6" stroke="#c4c4c4" stroke-width="1.1" fill="none"/><circle cx="1880" cy="1029.2" r="2.8" fill="#c4c4c4"/><rect x="1878.8" y="1032" width="2.4" height="2.2" fill="#c4c4c4"/><path d="M1873.4 1023 L1887 1037.2" stroke="#191919" stroke-width="2.4"/><path d="M1873.4 1023 L1887 1037.2" stroke="#c4c4c4" stroke-width="0.9"/><circle cx="1905.9" cy="1030" r="6.5" fill="none" stroke="#c4c4c4" stroke-width="1.1"/><path d="M1902.8 1030.2 L1905 1032.4 L1909 1028.2" stroke="#c4c4c4" stroke-width="1.4" fill="none"/></svg>
<svg style="left:0px;top:0px;" width="1" height="1" viewBox="0 0 1 1"><polygon points="15.6,1053.4 22,1052.5 22,1059.3 15.6,1059.3" fill="#fff"/><polygon points="22.9,1052.4 32.2,1051.6 32.2,1059.3 22.9,1059.3" fill="#fff"/><polygon points="15.6,1060.3 22,1060.3 22,1067.3 15.6,1066.5" fill="#fff"/><polygon points="22.9,1060.3 32.2,1060.3 32.2,1068.2 22.9,1067.4" fill="#fff"/></svg>
<div class="a" style="left:48px;top:1040px;width:288px;height:40px;background:#333333;border:1px solid #5c5c5c"></div>
<svg style="left:0px;top:0px;" width="1" height="1" viewBox="0 0 1 1"><circle cx="70.5" cy="1057.4" r="5.2" fill="none" stroke="#e8e8e8" stroke-width="1.1"/><path d="M66.8 1061.2 L60.2 1067.8" stroke="#e8e8e8" stroke-width="1.2"/></svg>
<svg style="left:0px;top:0px;" width="1" height="1" viewBox="0 0 1 1"><polygon points="257,1080 271.5,1068 325,1068 335,1075 335,1080" fill="#e3c59b"/><polygon points="257,1079 335,1079 335,1080 257,1080" fill="#d2ad7e"/><polygon points="270,1058 283,1053 296,1056 292.5,1070 279.5,1074 271.5,1071" fill="#5cb85c"/><polygon points="270.5,1057 282.5,1052 282.8,1068.8 272,1071" fill="#f1eef8"/><polygon points="282.5,1052 295,1055.5 291.8,1068 282.8,1068.8" fill="#e6e1f2"/><path d="M273 1059 L280 1056.5 M273.3 1062 L280.3 1059.5 M273.6 1065 L280.6 1062.5 M285 1057 L292 1059 M284.8 1060 L291.4 1062 M284.6 1063 L290.8 1065" stroke="#b0acc0" stroke-width="0.6"/><path d="M288 1061 L298 1049.5" stroke="#f5b93a" stroke-width="3"/><path d="M297 1050.6 L299.2 1048" stroke="#f06a5a" stroke-width="3"/><defs><linearGradient id="bp" x1="0" y1="0" x2="0" y2="1"><stop offset="0" stop-color="#1aa0ff"/><stop offset="1" stop-color="#2555e8"/></linearGradient></defs><path d="M311.5 1046 A3.6 3.6 0 0 1 318.8 1046" stroke="#2f7af0" stroke-width="1.6" fill="none"/><path d="M306 1054 Q306 1044.5 315.3 1044.5 Q324.8 1044.5 324.8 1054 V1071 Q324.8 1073.8 322 1073.8 H308.8 Q306 1073.8 306 1071Z" fill="url(#bp)"/><path d="M307.5 1064 Q307.5 1058.5 315.3 1058.5 Q323.2 1058.5 323.2 1064 V1070 H307.5Z" fill="#1e8cff"/><path d="M308 1070.2 H322.6" stroke="#c07cf0" stroke-width="1.2"/></svg>
<svg style="left:0px;top:0px;" width="1" height="1" viewBox="0 0 1 1"><circle cx="359.8" cy="1060.2" r="6.8" fill="none" stroke="#fff" stroke-width="1.7"/></svg>
<svg style="left:0px;top:0px;" width="1" height="1" viewBox="0 0 1 1"><path d="M400 1053 H410.5 M400 1067 H410.5" stroke="#fff" stroke-width="1.1"/><rect x="400.5" y="1055.5" width="9.5" height="9" fill="none" stroke="#fff" stroke-width="1.1"/><path d="M414.5 1052.2 V1056 M414.5 1060.2 V1067.2" stroke="#fff" stroke-width="1.1"/><rect x="413.2" y="1056.6" width="2.6" height="3" fill="#fff"/></svg>
<svg style="left:0px;top:0px;" width="1" height="1" viewBox="0 0 1 1"><defs><linearGradient id="xg" x1="0" y1="0" x2="0" y2="1"><stop offset="0" stop-color="#f78b38"/><stop offset="1" stop-color="#ec7420"/></linearGradient></defs><rect x="447" y="1048" width="23.8" height="24" rx="3" fill="url(#xg)"/><rect x="450" y="1049" width="18" height="2" rx="1" fill="#f9b788" opacity="0.8"/><g fill="#fff"><circle cx="454.8" cy="1056.7" r="4.6"/><circle cx="463.6" cy="1056.7" r="4.6"/><circle cx="454.8" cy="1062.8" r="4.6"/><circle cx="463.6" cy="1062.8" r="4.6"/><rect x="454.8" y="1056.8" width="8.8" height="6.2"/></g><g fill="#f07a20"><circle cx="455.2" cy="1057" r="1.5"/><circle cx="463.2" cy="1057" r="1.5"/><circle cx="455.2" cy="1062.5" r="1.5"/><circle cx="463.2" cy="1062.5" r="1.5"/><rect x="454" y="1059.2" width="2.4" height="3.6"/><rect x="462" y="1059.2" width="2.4" height="3.6"/><rect x="455.2" y="1059" width="8" height="2.2"/></g></svg>
<svg style="left:0px;top:0px;" width="1" height="1" viewBox="0 0 1 1"><path d="M514 1048 L520 1050.8 V1069 L514 1072 L501 1061.6 L497.6 1064.6 L496 1063.2 V1056.8 L497.6 1055.4 L501 1058.4Z M514 1054.6 L504.4 1060 L514 1065.4Z" fill="#1f9cf0" fill-rule="evenodd"/><path d="M514 1048 L520 1050.8 V1069 L514 1072Z" fill="#2aa8f5"/><path d="M514 1048 L496.6 1063.8 L498.2 1065.2 L514 1054.6Z" fill="#0b7dd0" opacity="0.7"/></svg>
<svg style="left:0px;top:0px;" width="1" height="1" viewBox="0 0 1 1"><path d="M546 1051 H553 L554.5 1052.6 H567.7 V1069 H546Z" fill="#f3c02c"/><rect x="546" y="1053" width="21.7" height="16" fill="#ffd65c"/><path d="M550.4 1069 V1061 H563.2 V1069 H559.6 V1064.2 H554 V1069Z" fill="#3d9be9"/></svg>
<svg style="left:0px;top:0px;" width="1" height="1" viewBox="0 0 1 1"><circle cx="605.8" cy="1059.8" r="12.2" fill="#2da44e"/><path d="M605.8 1059.8 L595.23,1053.70 A12.2 12.2 0 0 1 616.37,1053.70Z" fill="#e33b2e"/><path d="M605.8 1059.8 L616.37,1053.70 A12.2 12.2 0 0 1 605.80,1072.00Z" fill="#fbc02d"/><circle cx="605.8" cy="1059.8" r="6.1" fill="#fff"/><circle cx="605.8" cy="1059.8" r="4.9" fill="#3b7ded"/></svg>
<div class="a" style="left:631px;top:1040px;width:48px;height:38px;background:#5b5b5b"></div>
<div class="a" style="left:631px;top:1078px;width:48px;height:2px;background:#76b9ed"></div>
<svg style="left:0px;top:0px;" width="1" height="1" viewBox="0 0 1 1"><polygon points="655,1048.3 664.7,1053.9 655,1059.5 645.3,1053.9" fill="#7c7c7c"/><polygon points="645.3,1053.9 655,1059.5 655,1070.8 645.3,1065.2" fill="#505050"/><polygon points="664.7,1053.9 664.7,1065.2 655,1070.8 655,1059.5" fill="#000"/><polygon points="655.00,1052.73 661.57,1056.55 661.57,1063.76 655.00,1067.47 648.53,1063.76 648.53,1056.55" fill="#f4f4f4"/><polygon points="650.55,1057.93 654.05,1059.94 654.05,1064.18 650.55,1062.17" fill="#111"/><polygon points="659.45,1057.93 655.95,1059.94 655.95,1064.18 659.45,1062.17" fill="#111"/><polygon points="654.15,1052.84 655.85,1052.84 655.85,1058.46 655.00,1058.99 654.15,1058.46" fill="#7c7c7c"/></svg>
<svg style="left:0px;top:0px;" width="1" height="1" viewBox="0 0 1 1"><circle cx="704" cy="1059.8" r="12.2" fill="#2da44e"/><path d="M704 1059.8 L693.43,1053.70 A12.2 12.2 0 0 1 714.57,1053.70Z" fill="#e33b2e"/><path d="M704 1059.8 L714.57,1053.70 A12.2 12.2 0 0 1 704.00,1072.00Z" fill="#fbc02d"/><circle cx="704" cy="1059.8" r="6.1" fill="#fff"/><circle cx="704" cy="1059.8" r="4.9" fill="#3b7ded"/></svg>
<div class="a" style="left:684px;top:1078px;width:40px;height:2px;background:#76b9ed"></div>
<div class="a" style="left:742px;top:1048.6px;width:22px;height:21.40000000000009px;background:#0b0b3b;border:1.5px solid #6cb2f2"></div>
<div class="a" style="left:733px;top:1078px;width:40px;height:2px;background:#76b9ed"></div>
<svg style="left:0px;top:0px;" width="1" height="1" viewBox="0 0 1 1"><defs><linearGradient id="cg" x1="0" y1="0" x2="0" y2="1"><stop offset="0" stop-color="#dce8f8"/><stop offset="1" stop-color="#8eb4e8"/></linearGradient></defs><path d="M1532 1068 A4 4 0 0 1 1531 1060.2 A6 6 0 0 1 1541.5 1054.8 A5.4 5.4 0 0 1 1550.6 1059.6 A4.2 4.2 0 0 1 1549.6 1068Z" fill="url(#cg)"/></svg>
<svg style="left:0px;top:0px;" width="1" height="1" viewBox="0 0 1 1"><path d="M1677.5 1063.4 L1683.3 1057 L1689 1063.4" stroke="#fff" stroke-width="1.1" fill="none"/><rect x="1703.5" y="1056.6" width="11.2" height="7.2" fill="none" stroke="#fff" stroke-width="1.1"/><rect x="1714.8" y="1058.6" width="1.2" height="3.2" fill="#fff"/><rect x="1705.5" y="1058.6" width="7.4" height="3.4" fill="#fff"/><path d="M1699.8 1054.2 V1057 M1702.2 1054.2 V1057 M1699 1057 H1703 V1059.4 Q1701 1061.5 1699 1059.4Z M1701 1060 V1065.2" stroke="#fff" stroke-width="0.9" fill="none"/><path d="M1726.2 1066 A11 11 0 0 1 1738 1054.6 M1728.8 1066.2 A8.3 8.3 0 0 1 1738 1057.4 M1731.6 1066.4 A5.6 5.6 0 0 1 1738 1060.2" stroke="#fff" stroke-width="1" fill="none"/><circle cx="1736.8" cy="1065.4" r="1.4" fill="#fff"/><path d="M1746.8 1057.4 H1749.4 L1752.6 1054.4 V1065.8 L1749.4 1062.8 H1746.8Z" fill="none" stroke="#fff" stroke-width="1"/><path d="M1755.2 1057.8 L1760 1062.6 M1760 1057.8 L1755.2 1062.6" stroke="#fff" stroke-width="1"/><path d="M1879 1052 H1895 V1065 H1888.4 L1887 1067.6 L1885.6 1065 H1879Z" fill="#fff"/><path d="M1881.6 1055 H1892.4 M1881.6 1058 H1892.4 M1881.6 1061 H1888.6" stroke="#1c1c1c" stroke-width="1"/></svg>
<div class="a" style="left:1915px;top:1040px;width:1px;height:40px;background:#6a6a6a"></div>
<div class="t" style="left:23.50px;top:6px;font-size:12px;color:#000;letter-spacing:-0.180px;">10Animacions2D - SampleScene - Windows, Mac, Linux - Unity 2023.1.14f1 &lt;DX11&gt;</div>
<div class="t" style="left:7.50px;top:27px;font-size:12px;color:#000;letter-spacing:-0.444px;">File</div>
<div class="t" style="left:39.40px;top:27px;font-size:12px;color:#000;letter-spacing:-0.525px;">Edit</div>
<div class="t" style="left:73.10px;top:27px;font-size:12px;color:#000;letter-spacing:-0.722px;">Assets</div>
<div class="t" style="left:120.60px;top:27px;font-size:12px;color:#000;letter-spacing:-0.273px;">GameObject</div>
<div class="t" style="left:200.20px;top:27px;font-size:12px;color:#000;letter-spacing:0.195px;">Component</div>
<div class="t" style="left:277.90px;top:27px;font-size:12px;color:#000;letter-spacing:-0.546px;">Services</div>
<div class="t" style="left:333.80px;top:27px;font-size:12px;color:#000;letter-spacing:-1.215px;">Jobs</div>
<div class="t" style="left:371.20px;top:27px;font-size:12px;color:#000;letter-spacing:0.218px;">Window</div>
<div class="t" style="left:429.80px;top:27px;font-size:12px;color:#000;letter-spacing:-0.261px;">Help</div>
<div class="t" style="left:33.00px;top:53px;font-size:12px;color:#b4b4b4;letter-spacing:-0.332px;">JF</div>
<div class="t" style="left:125.80px;top:53px;font-size:12px;color:#c4c4c4;letter-spacing:0.287px;">Asset Store</div>
<div class="t" style="left:1751.50px;top:53px;font-size:12px;color:#c4c4c4;letter-spacing:0.198px;">Layers</div>
<div class="t" style="left:1835.50px;top:53px;font-size:12px;color:#c4c4c4;letter-spacing:0.295px;">Layout</div>
<div class="t" style="left:23.40px;top:78px;font-size:12px;color:#c4c4c4;letter-spacing:0.145px;">Scene</div>
<div class="t" style="left:35.50px;top:99px;font-size:12px;color:#c4c4c4;letter-spacing:0.298px;">Center</div>
<div class="t" style="left:114.50px;top:99px;font-size:12px;color:#c4c4c4;letter-spacing:0.062px;">Global</div>
<div class="t" style="left:901.60px;top:78px;font-size:12px;color:#c4c4c4;letter-spacing:0.294px;">Hierarchy</div>
<div class="t" style="left:1178.00px;top:97px;font-size:11px;color:#808080;letter-spacing:-0.111px;">All</div>
<div class="t" style="left:942.00px;top:115px;font-size:12px;color:#d2d2d2;letter-spacing:0.796px;font-weight:bold;">SampleScene</div>
<div class="t" style="left:955.50px;top:131px;font-size:12px;color:#c4c4c4;letter-spacing:0.196px;">Main Camera</div>
<div class="t" style="left:1514.50px;top:78px;font-size:12px;color:#c4c4c4;letter-spacing:0.393px;">Inspector</div>
<div class="t" style="left:23.40px;top:639px;font-size:12px;color:#c4c4c4;letter-spacing:0.262px;">Console</div>
<div class="t" style="left:111.50px;top:639px;font-size:12px;color:#c4c4c4;letter-spacing:-0.192px;">Game</div>
<div class="t" style="left:4.30px;top:658px;font-size:12px;color:#c4c4c4;letter-spacing:0.155px;">Clear</div>
<div class="t" style="left:63.30px;top:658px;font-size:12px;color:#c4c4c4;letter-spacing:0.244px;">Collapse</div>
<div class="t" style="left:122.90px;top:658px;font-size:12px;color:#c4c4c4;letter-spacing:0.117px;">Error Pause</div>
<div class="t" style="left:197.50px;top:658px;font-size:12px;color:#c4c4c4;letter-spacing:0.291px;">Editor</div>
<div class="t" style="left:795.00px;top:658px;font-size:12px;color:#c4c4c4;letter-spacing:0.000px;">0</div>
<div class="t" style="left:829.00px;top:658px;font-size:12px;color:#c4c4c4;letter-spacing:0.000px;">0</div>
<div class="t" style="left:863.00px;top:658px;font-size:12px;color:#c4c4c4;letter-spacing:0.000px;">0</div>
<div class="t" style="left:901.30px;top:639px;font-size:12px;color:#c4c4c4;letter-spacing:0.359px;">Project</div>
<div class="t" style="left:912.00px;top:676px;font-size:12px;color:#d2d2d2;letter-spacing:0.781px;font-weight:bold;">Favorites</div>
<div class="t" style="left:925.40px;top:692px;font-size:12px;color:#c4c4c4;letter-spacing:0.271px;">All Materials</div>
<div class="t" style="left:925.40px;top:708px;font-size:12px;color:#c4c4c4;letter-spacing:0.260px;">All Models</div>
<div class="t" style="left:925.40px;top:724px;font-size:12px;color:#c4c4c4;letter-spacing:0.248px;">All Prefabs</div>
<div class="t" style="left:912.00px;top:755px;font-size:12px;color:#d2d2d2;letter-spacing:0.648px;font-weight:bold;">Assets</div>
<div class="t" style="left:925.00px;top:771px;font-size:12px;color:#c4c4c4;letter-spacing:0.316px;">Scenes</div>
<div class="t" style="left:912.00px;top:787px;font-size:12px;color:#d2d2d2;letter-spacing:0.803px;font-weight:bold;">Packages</div>
<div class="t" style="left:1088.75px;top:678px;font-size:12px;color:#d2d2d2;letter-spacing:0.698px;font-weight:bold;">Assets</div>
<div class="t" style="left:1119.40px;top:697px;font-size:12.5px;color:#c4c4c4;letter-spacing:0.532px;">Scenes</div>
<div class="t" style="left:1471.50px;top:657px;font-size:12px;color:#ababab;letter-spacing:-1.344px;">21</div>
<div class="t" style="left:88.50px;top:1053px;font-size:14.5px;color:#e4e4e4;letter-spacing:-0.054px;">Escriu aquí per cercar</div>
<div class="t" style="left:1561.70px;top:1053px;font-size:14px;color:#f0f0f0;letter-spacing:-1.059px;">18°C</div>
<div class="t" style="left:1599.70px;top:1053px;font-size:14px;color:#f0f0f0;letter-spacing:0.075px;">Nublado</div>
<div class="t" style="left:1774.50px;top:1054px;font-size:12px;color:#f0f0f0;letter-spacing:-1.406px;">CAT</div>
<div class="t" style="left:1822.40px;top:1045px;font-size:12px;color:#f0f0f0;letter-spacing:-1.031px;">16:40</div>
<div class="t" style="left:1813.50px;top:1063px;font-size:12px;color:#f0f0f0;letter-spacing:-0.317px;">1/2/2024</div>
<div class="t" style="left:619.00px;top:100px;font-size:10.5px;color:#e8e8e8;letter-spacing:0.000px;font-weight:bold;">2D</div>
<div class="t" style="left:745.50px;top:1054px;font-size:13px;color:#8cc7ff;letter-spacing:-0.799px;font-weight:bold;">Ps</div>
</body></html>
